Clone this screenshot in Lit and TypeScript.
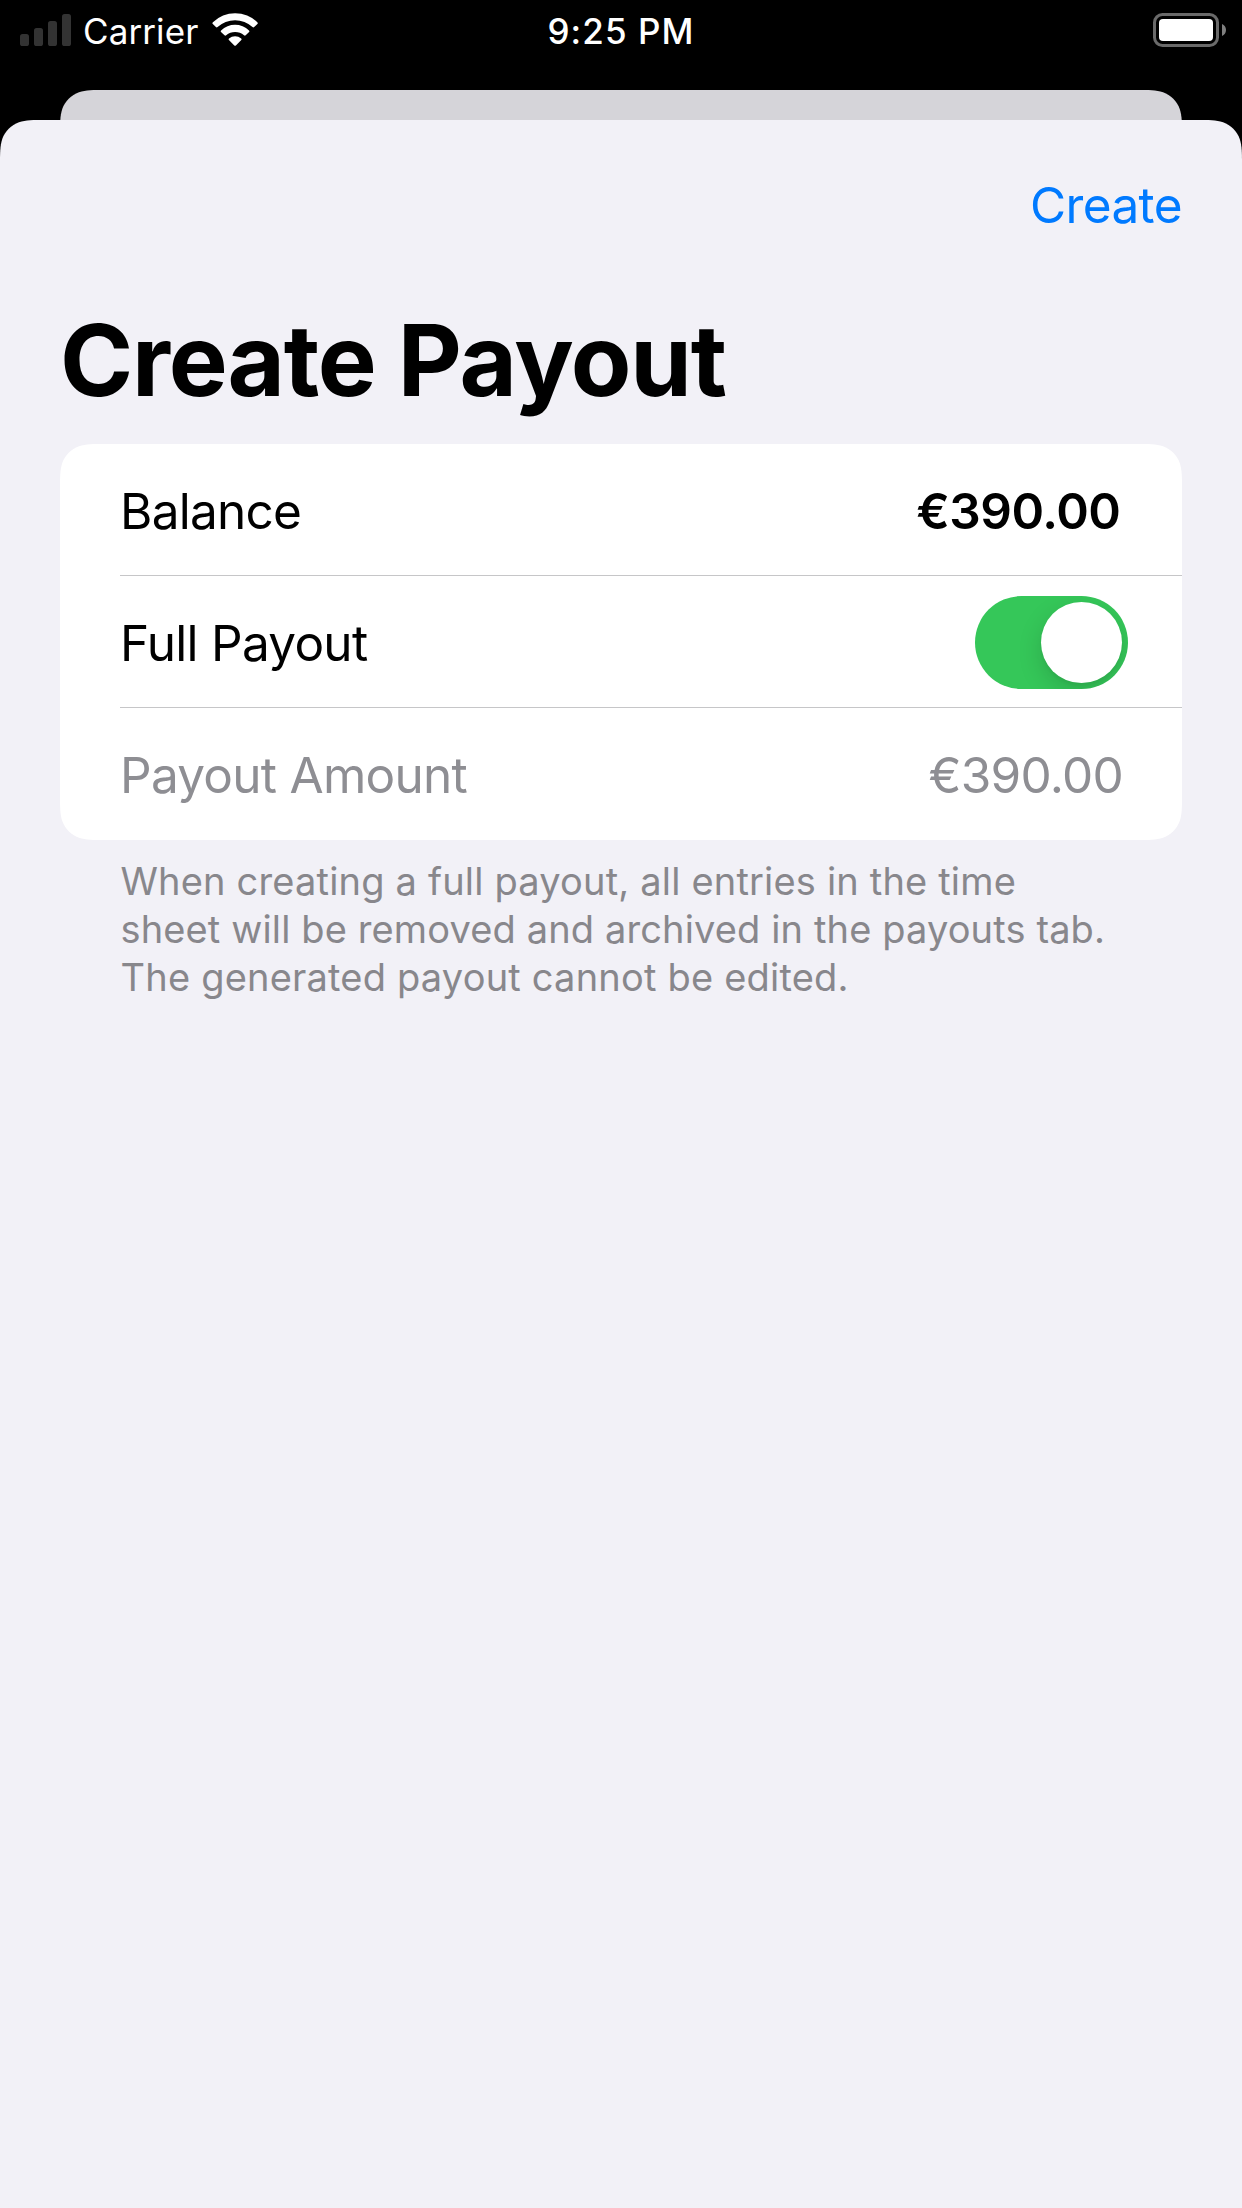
import { LitElement, html, css, svg, unsafeCSS } from "lit";
import { customElement, property, state } from "lit/decorators.js";
import { classMap } from "lit/directives/class-map.js";

/** Outline of a w×h box with continuous-curvature corners of radius r. */
function squircle(w: number, h: number, r: number, roundBottom: boolean): string {
  const [a, b, c, d, e, f] = [1.52866, 1.08849, 0.86841, 0.63149, 0.37282, 0.16906].map((k) => k * r);
  const g = 0.07491 * r;
  const top =
    `M${a} 0L${w - a} 0C${w - b} 0 ${w - c} 0 ${w - d} ${g}` +
    `C${w - e} ${f} ${w - f} ${e} ${w - g} ${d}C${w} ${c} ${w} ${b} ${w} ${a}`;
  const bottom = roundBottom
    ? `L${w} ${h - a}C${w} ${h - b} ${w} ${h - c} ${w - g} ${h - d}` +
      `C${w - f} ${h - e} ${w - e} ${h - f} ${w - d} ${h - g}C${w - c} ${h} ${w - b} ${h} ${w - a} ${h}` +
      `L${a} ${h}C${b} ${h} ${c} ${h} ${d} ${h - g}` +
      `C${e} ${h - f} ${f} ${h - e} ${g} ${h - d}C0 ${h - c} 0 ${h - b} 0 ${h - a}`
    : `L${w} ${h}L0 ${h}`;
  return `path("${top}${bottom}L0 ${a}C0 ${b} 0 ${c} ${g} ${d}C${f} ${e} ${e} ${f} ${d} ${g}C${c} 0 ${b} 0 ${a} 0Z")`;
}

@customElement("status-bar")
export class StatusBar extends LitElement {
  static styles = css`
    :host {
      display: grid;
      grid-template-columns: 1fr auto 1fr;
      height: 62px;
      line-height: 62px;
      color: #fff;
      font-size: 35px;
    }
    .left {
      display: flex;
      padding-left: 20px;
    }
    .right {
      display: flex;
      justify-content: flex-end;
      padding-right: 16px;
    }
    svg {
      display: block;
      flex: none;
    }
    .carrier {
      width: 116px;
      margin: 0 12px;
      letter-spacing: 0.1px;
    }
    .time {
      font-weight: 500;
      letter-spacing: 1.05px;
    }
  `;

  render() {
    const bars = [12, 18, 25, 32];
    return html`
      <div class="left">
        <svg width="51" height="62" viewBox="0 0 51 62" fill="#333">
          ${bars.map((h, i) => svg`<rect x=${i * 14} y=${46 - h} width="9" height=${h} rx="2.6" />`)}
        </svg>
        <span class="carrier">Carrier</span>
        <svg width="48" height="62" viewBox="211 0 48 62" fill="#fff">
          <path d="M212.9 22.3A31.5 31.5 0 0 1 257.3 22.3Q258.2 23.1 257.4 23.9L254.2 27.1Q253.4 27.9 252.5 27.1A25.6 25.6 0 0 0 217.6 27.1Q216.7 27.9 215.9 27.1L212.8 23.9Q212 23.1 212.9 22.3Z" />
          <path d="M221.1 30.4A20 20 0 0 1 249 30.4Q249.9 31.2 249.1 32L245.7 35.3Q244.9 36.1 244 35.3A13.6 13.6 0 0 0 226.2 35.3Q225.3 36.1 224.5 35.3L221 32Q220.2 31.2 221.1 30.4Z" />
          <path d="M229 38.5A9.5 9.5 0 0 1 241.2 38.5Q242.1 39.2 241.3 40L235.9 45.4Q235.1 46.2 234.3 45.4L228.9 40Q228.1 39.2 229 38.5Z" />
        </svg>
      </div>
      <span class="time">9:25 PM</span>
      <div class="right">
        <svg width="73" height="62" viewBox="1153 0 73 62">
          <rect x="1154.5" y="14.5" width="63" height="31" rx="8" fill="none" stroke="#6a6a6a" stroke-width="3" />
          <rect x="1159" y="19" width="54" height="22" rx="4" fill="#fff" />
          <path d="M1222 24C1224.4 25 1226 27.3 1226 30S1224.4 35 1222 36Z" fill="#7f7f7f" />
        </svg>
      </div>
    `;
  }
}

@customElement("toggle-switch")
export class ToggleSwitch extends LitElement {
  @property({ type: Boolean }) on = false;

  static styles = css`
    :host {
      display: block;
    }
    .track {
      display: flex;
      box-sizing: border-box;
      width: 153px;
      height: 93px;
      padding: 6px;
      border-radius: 46.5px;
      background: #e9e9ea;
      overflow: hidden;
    }
    .track.on {
      background: #35c759;
      justify-content: flex-end;
    }
    .knob {
      width: 81px;
      height: 81px;
      border-radius: 50%;
      background: #fff;
      box-shadow: 0 9px 24px rgba(0, 0, 0, 0.15), 0 3px 3px rgba(0, 0, 0, 0.04);
    }
  `;

  render() {
    return html`<div
      class=${classMap({ track: true, on: this.on })}
      role="switch"
      aria-checked=${this.on}
      @click=${() => this.dispatchEvent(new CustomEvent("toggle"))}
    >
      <div class="knob"></div>
    </div>`;
  }
}

@customElement("app-root")
export class AppRoot extends LitElement {
  @state() private fullPayout = true;

  static styles = css`
    :host {
      display: block;
      width: 1242px;
      height: 2208px;
      overflow: hidden;
      background: #000;
      color: #000;
      font-family: Inter, "Liberation Sans", sans-serif;
    }
    .backdrop {
      height: 60px;
      margin: 28px 60px -30px;
      background: #d5d4d9;
      clip-path: ${unsafeCSS(squircle(1122, 60, 30, false))};
    }
    .sheet {
      display: flow-root;
      box-sizing: border-box;
      position: relative;
      height: 2088px;
      padding: 55px 60px 0;
      background: #f2f1f7;
      clip-path: ${unsafeCSS(squircle(1242, 2088, 30, false))};
    }
    .nav {
      display: flex;
      justify-content: flex-end;
      height: 60px;
      line-height: 60px;
      font-size: 49.5px;
      letter-spacing: -0.6px;
      color: #007aff;
    }
    h1 {
      margin: 65px 0 24px 0;
      font-size: 99px;
      line-height: 120px;
      font-weight: 700;
      letter-spacing: -1.2px;
    }
    .card {
      background: #fff;
      clip-path: ${unsafeCSS(squircle(1122, 396, 30, true))};
    }
    .row {
      display: flex;
      align-items: center;
      justify-content: space-between;
      box-sizing: border-box;
      height: 132px;
      margin-left: 60px;
      padding: 2px 59px 0 0;
      font-size: 49.5px;
      line-height: 60px;
      letter-spacing: -0.73px;
    }
    .row.divided {
      border-bottom: 1px solid #c6c6c8;
      padding-top: 3px;
    }
    .total {
      margin-right: 2.5px;
      font-weight: 600;
      letter-spacing: -0.5px;
    }
    .row.control {
      padding-right: 54px;
    }
    .control toggle-switch {
      margin-top: -2px;
    }
    .muted {
      color: #8e8e93;
    }
    .footer {
      margin: 17px 0 0 60.5px;
      font-size: 38px;
      line-height: 48px;
      color: #88878c;
    }
    .line {
      display: block;
      white-space: nowrap;
      letter-spacing: 0.18px;
    }
    .line.tight {
      letter-spacing: 0.13px;
    }
    .line.loose {
      letter-spacing: 0.2px;
    }
  `;

  render() {
    return html`
      <status-bar></status-bar>
      <div class="backdrop"></div>
      <main class="sheet">
        <nav class="nav"><span>Create</span></nav>
        <h1>Create Payout</h1>
        <section class="card">
          <div class="row divided"><span>Balance</span><span class="total">€390.00</span></div>
          <div class="row divided control">
            <span>Full Payout</span>
            <toggle-switch ?on=${this.fullPayout} @toggle=${() => (this.fullPayout = !this.fullPayout)}></toggle-switch>
          </div>
          <div class="row muted"><span>Payout Amount</span><span>€390.00</span></div>
        </section>
        <div class="footer">
          <span class="line">When creating a full payout, all entries in the time</span>
          <span class="line tight">sheet will be removed and archived in the payouts tab.</span>
          <span class="line loose">The generated payout cannot be edited.</span>
        </div>
      </main>
    `;
  }
}
